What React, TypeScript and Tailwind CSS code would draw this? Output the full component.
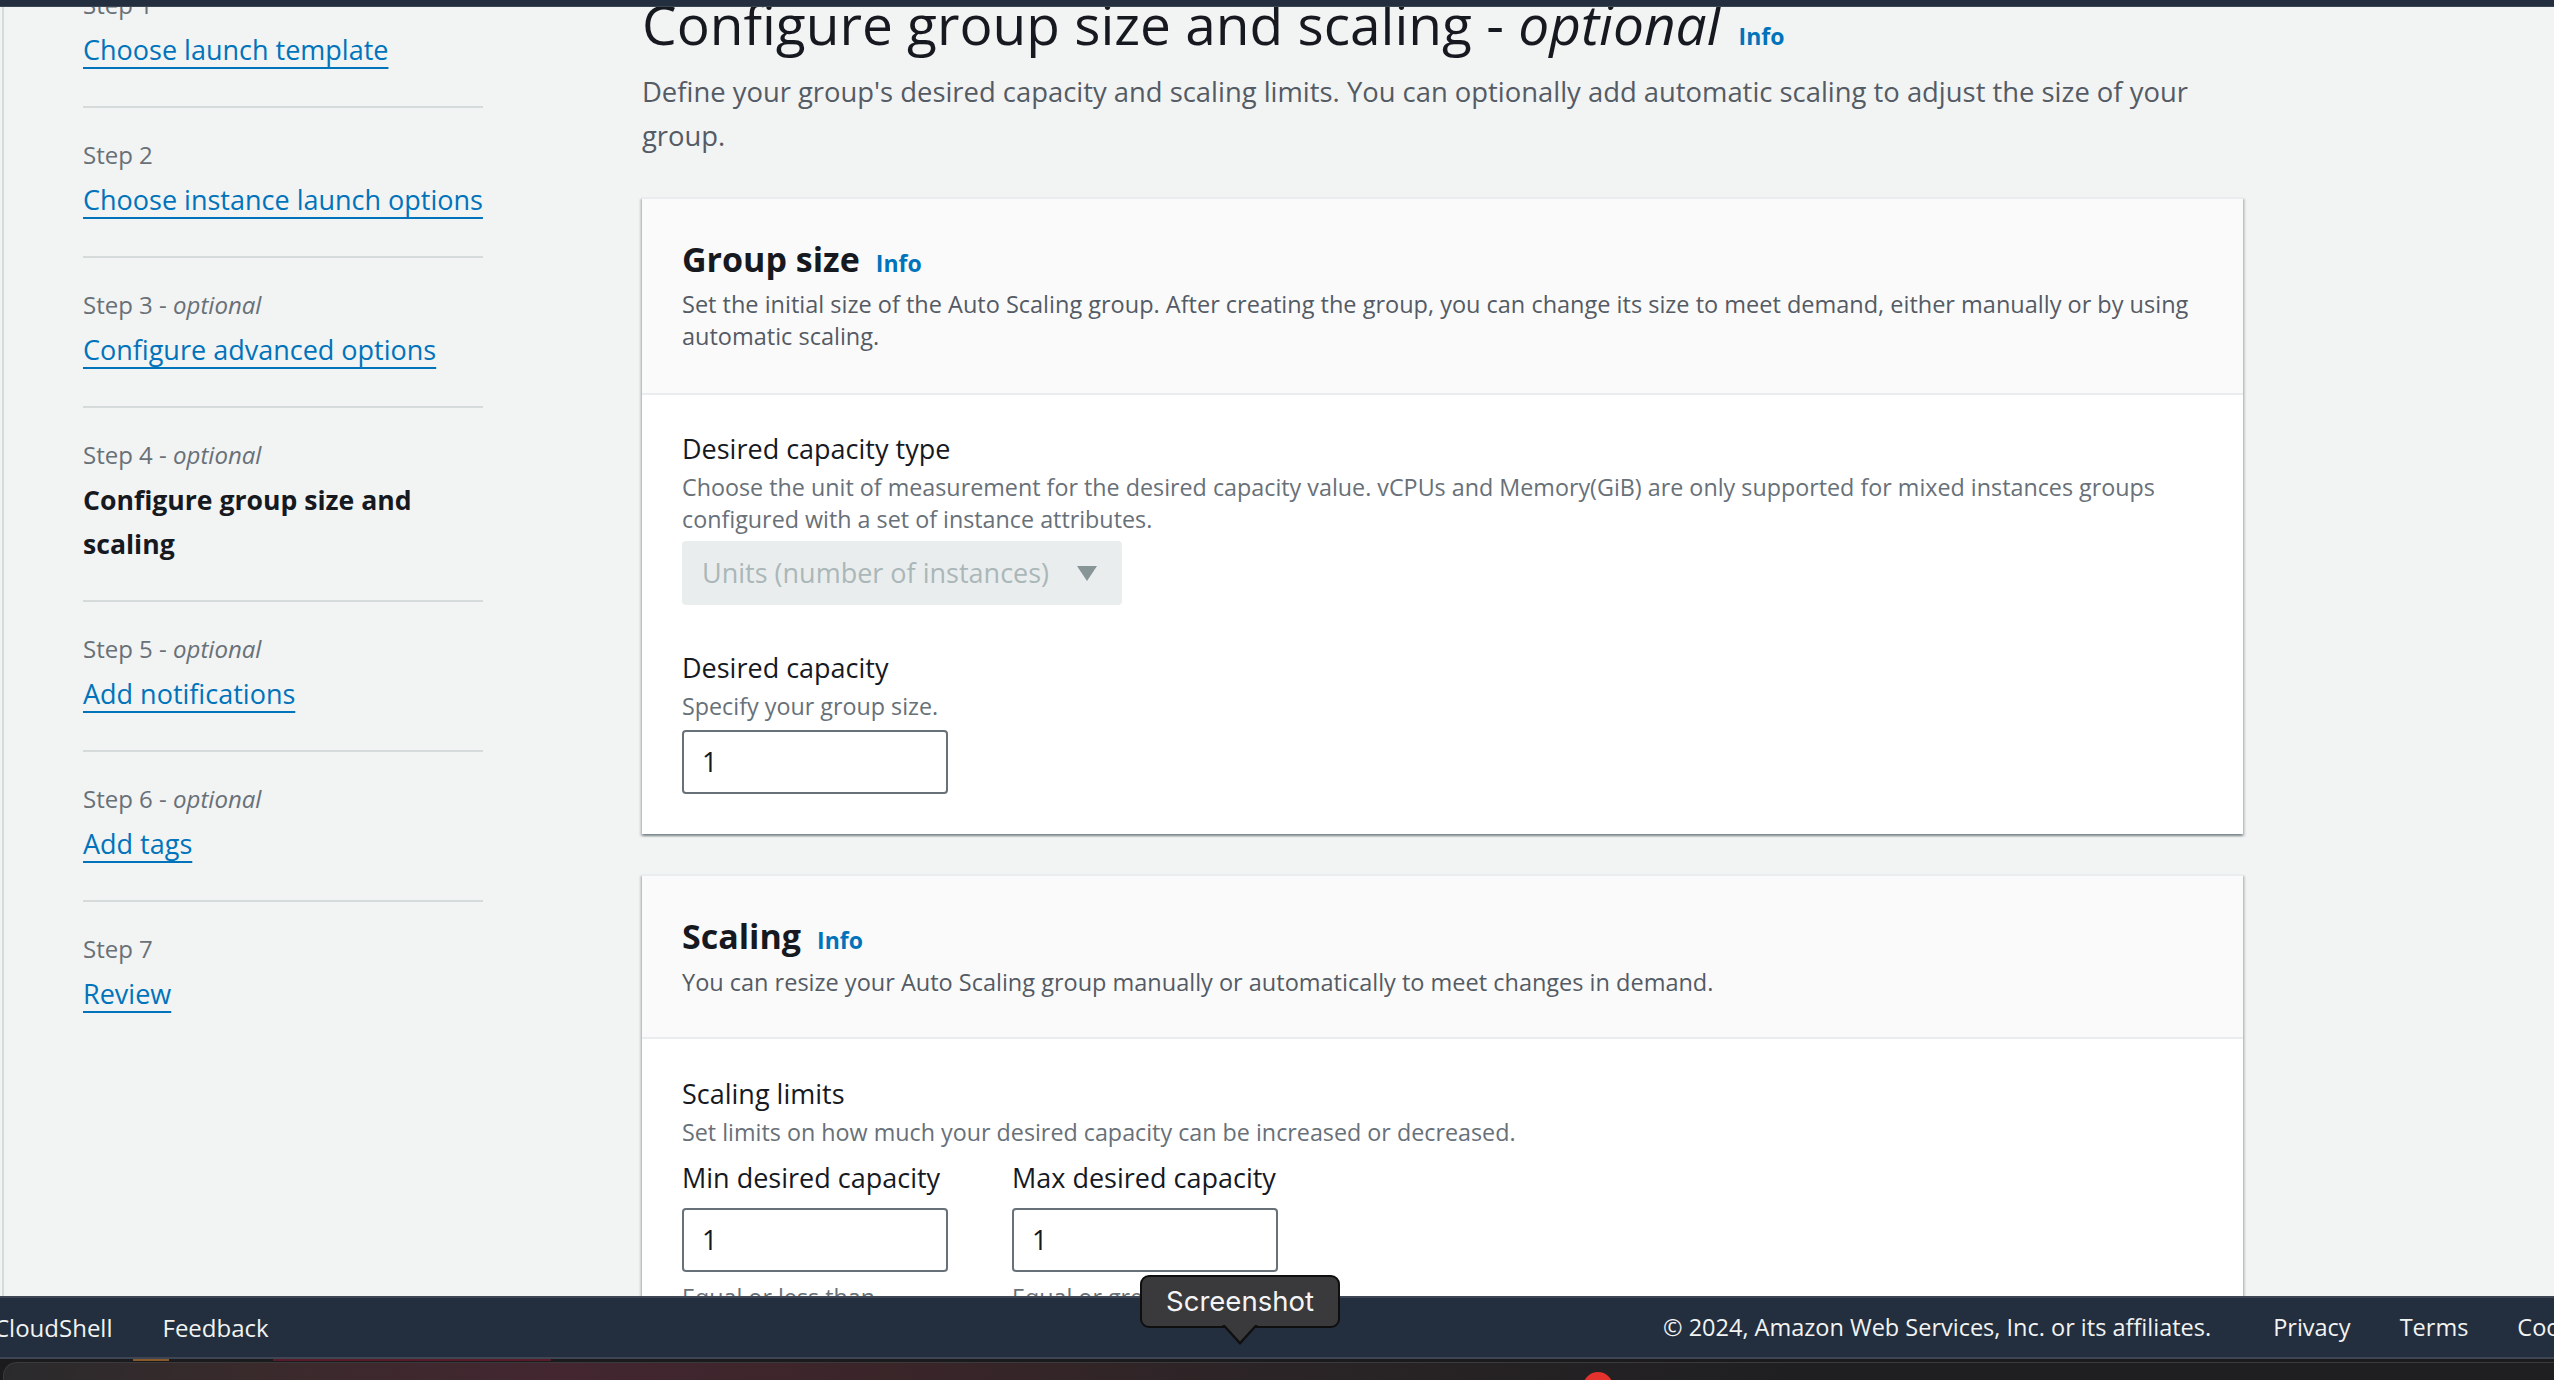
import React from "react";

type NavProps = {
  step: string;
  optional?: boolean;
  title: React.ReactNode;
  active?: boolean;
  last?: boolean;
};

function NavItem({ step, optional, title, active, last }: NavProps) {
  return (
    <div className={`pt-[31px] pb-[34px] ${last ? "" : "border-b-2 border-[#d5dbdb]"}`}>
      <div className="text-[24px] leading-[32px] text-[#687078] whitespace-nowrap">
        {step}
        {optional ? (
          <>
            {" - "}
            <i>optional</i>
          </>
        ) : null}
      </div>
      <div className="mt-[7px] text-[27px] leading-[44px] whitespace-nowrap">
        {active ? (
          <span className="font-bold text-[26.6px] text-[#16191f]">{title}</span>
        ) : (
          <a className="text-[#0073bb] underline decoration-2 underline-offset-[7px]">{title}</a>
        )}
      </div>
    </div>
  );
}

function Info({ gap = "ml-[16px]" }: { gap?: string }) {
  return <span className={`text-[23px] font-bold text-[#0073bb] ${gap} align-baseline`}>Info</span>;
}

function Input({ value }: { value: string }) {
  return (
    <div className="w-[266px] h-[64px] border-2 border-[#687078] rounded-[4px] bg-white flex items-center pl-[18px] text-[27px] text-[#16191f]">
      {value}
    </div>
  );
}

const cardShadow =
  "shadow-[0_2px_2px_0_rgba(0,28,36,0.3),2px_2px_2px_0_rgba(0,28,36,0.15),-2px_2px_2px_0_rgba(0,28,36,0.15)]";

export default function App() {
  return (
    <div className="w-[2554px] h-[1380px] overflow-hidden relative bg-[#f2f3f3] flex flex-col font-['Open_Sans',sans-serif]">
      {/* top bar */}
      <div className="h-[7px] shrink-0 bg-[#232f3e] border-b border-[#3c4653] relative z-10" />

      {/* content area */}
      <div className="h-[1289px] shrink-0 flex overflow-hidden">
        {/* sidebar */}
        <aside className="w-[640px] ml-[2px] shrink-0 border-l-2 border-[#d5dbdb] pl-[79px]">
          <div className="w-[400px] mt-[-49px]">
            <NavItem step="Step 1" title="Choose launch template" />
            <NavItem step="Step 2" title="Choose instance launch options" />
            <NavItem step="Step 3" optional title="Configure advanced options" />
            <NavItem
              step="Step 4"
              optional
              active
              title={
                <>
                  Configure group size and
                  <br />
                  scaling
                </>
              }
            />
            <NavItem step="Step 5" optional title="Add notifications" />
            <NavItem step="Step 6" optional title="Add tags" />
            <NavItem step="Step 7" title="Review" last />
          </div>
        </aside>

        {/* main */}
        <main className="w-[1601px] shrink-0 mt-[-13px]">
          <h1 className="text-[55px] leading-[60px] text-[#16191f] font-normal whitespace-nowrap">
            Configure group size and scaling - <i>optional</i>
            <Info gap="ml-[18px]" />
          </h1>
          <p className="mt-[4px] text-[27.4px] leading-[44px] text-[#545b64] whitespace-nowrap">
            Define your group's desired capacity and scaling limits. You can optionally add automatic scaling to adjust the size of your
            <br />
            group.
          </p>

          {/* Group size card */}
          <section className={`mt-[39px] bg-white border-t-2 border-[#eaeded] ${cardShadow}`}>
            <div className="bg-[#fafafa] px-[40px] pt-[38px] pb-[41px] border-b-2 border-[#eaeded]">
              <h2 className="text-[34px] leading-[44px] font-bold text-[#16191f] whitespace-nowrap">
                Group size
                <Info />
              </h2>
              <p className="mt-[3px] text-[23.5px] leading-[32px] text-[#545b64] whitespace-nowrap">
                Set the initial size of the Auto Scaling group. After creating the group, you can change its size to meet demand, either manually or by using
                <br />
                automatic scaling.
              </p>
            </div>
            <div className="px-[40px] pt-[32px] pb-[40px]">
              <div className="text-[27px] leading-[44px] text-[#16191f]">Desired capacity type</div>
              <p className="text-[23.3px] leading-[32px] text-[#687078] whitespace-nowrap">
                Choose the unit of measurement for the desired capacity value. vCPUs and Memory(GiB) are only supported for mixed instances groups
                <br />
                configured with a set of instance attributes.
              </p>
              <div className="mt-[6px] w-[440px] h-[64px] rounded-[4px] bg-[#eaeded] flex items-center justify-between pl-[20px] pr-[25px]">
                <span className="text-[27px] text-[#aab7b8] whitespace-nowrap">Units (number of instances)</span>
                <svg width="20" height="15" viewBox="0 0 20 15">
                  <polygon points="0,0 20,0 10,15" fill="#879596" />
                </svg>
              </div>
              <div className="mt-[41px] text-[27px] leading-[44px] text-[#16191f]">Desired capacity</div>
              <p className="text-[23.3px] leading-[32px] text-[#687078]">Specify your group size.</p>
              <div className="mt-[8px]">
                <Input value="1" />
              </div>
            </div>
          </section>

          {/* Scaling card */}
          <section className={`mt-[40px] bg-white border-t-2 border-[#eaeded] ${cardShadow}`}>
            <div className="bg-[#fafafa] px-[40px] pt-[38px] pb-[39px] border-b-2 border-[#eaeded]">
              <h2 className="text-[34px] leading-[44px] font-bold text-[#16191f] whitespace-nowrap">
                Scaling
                <Info />
              </h2>
              <p className="mt-[4px] text-[23.5px] leading-[32px] text-[#545b64] whitespace-nowrap">
                You can resize your Auto Scaling group manually or automatically to meet changes in demand.
              </p>
            </div>
            <div className="px-[40px] pt-[33px] pb-[41px]">
              <div className="text-[27px] leading-[44px] text-[#16191f]">Scaling limits</div>
              <p className="text-[23.3px] leading-[32px] text-[#687078]">
                Set limits on how much your desired capacity can be increased or decreased.
              </p>
              <div className="mt-[8px] flex gap-[64px]">
                <div className="w-[266px]">
                  <div className="text-[27px] leading-[44px] text-[#16191f] whitespace-nowrap">Min desired capacity</div>
                  <div className="mt-[8px]">
                    <Input value="1" />
                  </div>
                  <p className="mt-[9px] text-[23.3px] leading-[32px] text-[#687078]">Equal or less than desired capacity.</p>
                </div>
                <div className="w-[266px]">
                  <div className="text-[27px] leading-[44px] text-[#16191f] whitespace-nowrap">Max desired capacity</div>
                  <div className="mt-[8px]">
                    <Input value="1" />
                  </div>
                  <p className="mt-[9px] text-[23.3px] leading-[32px] text-[#687078]">Equal or greater than desired capacity.</p>
                </div>
              </div>
            </div>
          </section>
        </main>
      </div>

      {/* footer */}
      <footer className="h-[63px] shrink-0 bg-[#232f3e] border-t-2 border-b-2 border-t-[#3d4652] border-b-[#3d4652] flex items-center overflow-hidden whitespace-nowrap text-[24px] text-[#f2f3f3]">
        <div className="w-[1669px] shrink-0 -ml-[6px] flex gap-[50px]">
          <span>CloudShell</span>
          <span>Feedback</span>
        </div>
        <div className="flex shrink-0 text-[23.5px]">
          <span>© 2024, Amazon Web Services, Inc. or its affiliates.</span>
          <span className="ml-[62px]">Privacy</span>
          <span className="ml-[49px]">Terms</span>
          <span className="ml-[49px]">Cookie preferences</span>
        </div>
      </footer>

      {/* dock strip */}
      <div className="h-[21px] shrink-0 bg-[#1b1b1d] relative overflow-hidden">
        <div className="absolute left-[3px] right-0 top-[3px] h-[40px] rounded-tl-[14px] border-t border-l border-[#3a3a3c] bg-[linear-gradient(90deg,#2a2a2c_0%,#3a2a2c_10%,#432630_22%,#3a2529_35%,#2a2426_50%,#1f1f21_70%,#1f1f21_100%)]" />
        <div className="absolute left-[133px] top-0 w-[36px] h-[2px] bg-[#8a5a2a]" />
        <div className="absolute left-[273px] top-0 w-[278px] h-[2px] bg-[#5a1a2a]" />
        <div className="absolute left-[1583px] top-[13px] w-[30px] h-[30px] rounded-full bg-[#e5322d]" />
      </div>

      {/* tooltip overlay */}
      <div className="absolute left-[1140px] top-[1275px] w-[200px] h-[53px] rounded-[9px] bg-[#3a3a3c] border-2 border-[#0f0f10] flex items-center justify-center font-['Inter',sans-serif] text-[27.5px] text-[#f5f5f7]">
        Screenshot
      </div>
      <svg className="absolute left-[1222px] top-[1325px]" width="36" height="21" viewBox="0 0 36 21">
        <polygon points="0,0 36,0 18,20" fill="#0f0f10" />
        <polygon points="3,0 33,0 18,16.5" fill="#3a3a3c" />
      </svg>
    </div>
  );
}
